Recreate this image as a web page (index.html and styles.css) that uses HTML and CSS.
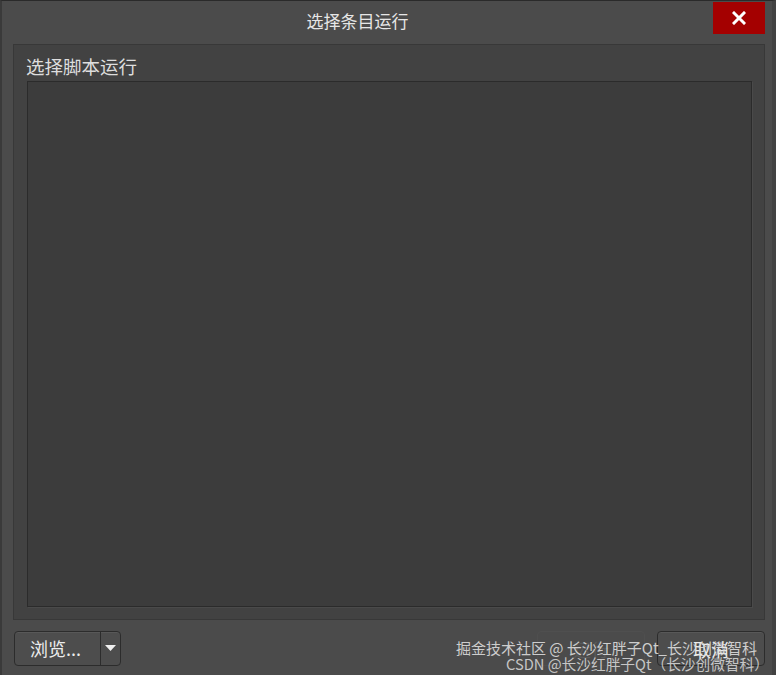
FILE: index.html
```html
<!DOCTYPE html>
<html lang="zh-CN">
<head>
    <meta charset="UTF-8">
    <title>选择条目运行</title>
    <link rel="stylesheet" href="styles.css">
</head>
<body>
    <div class="window">
        <!-- Barra de titulo -->
        <div class="titlebar">
            <span class="title">选择条目运行</span>
            <button class="close-btn">
                <svg width="14" height="14" viewBox="0 0 14 14">
                    <path d="M2 2 L12 12 M12 2 L2 12" stroke="#ffffff" stroke-width="3" stroke-linecap="square"/>
                </svg>
            </button>
        </div>

        <!-- Grupo -->
        <div class="group">
            <div class="group-label">选择脚本运行</div>
            <div class="script-list"></div>
        </div>

        <!-- Botoes -->
        <div class="footer">
            <div class="split-btn">
                <span class="split-main">浏览...</span>
                <span class="split-arrow">
                    <svg width="11" height="6" viewBox="0 0 11 6"><path d="M0 0 H11 L5.5 6 Z" fill="#f0f0f0"/></svg>
                </span>
            </div>
            <div class="right-btns">
                <button class="dlg-btn disabled">运行</button>
                <button class="dlg-btn">取消</button>
            </div>
        </div>

        <div class="watermark">
            <div class="wm-juejin">掘金技术社区 @ 长沙红胖子Qt_长沙创微智科</div>
            <div class="wm-csdn">CSDN @长沙红胖子Qt（长沙创微智科）</div>
        </div>
    </div>
</body>
</html>
```

FILE: styles.css
```css
/* Base */
* {
    box-sizing: border-box;
}

body {
    margin: 0;
    background-color: #4b4b4b;
    font-family: "Noto Sans CJK SC", "Noto Sans", sans-serif;
}

.window {
    position: relative;
    width: 776px;
    height: 675px;
    background-color: #4b4b4b;
    border-top: 1px solid #2a2a2a;
    border-left: 2px solid #3a3a3a;
    border-right: 4px solid #424242;
    display: flex;
    flex-direction: column;
}

/* Titulo */
.titlebar {
    height: 43px;
    display: flex;
    align-items: flex-start;
    padding-right: 7px;
}

.title {
    flex-grow: 1;
    text-align: center;
    color: #e6e6e6;
    font-size: 17px;
    line-height: 20px;
    margin-top: 10px;
}

.close-btn {
    width: 52px;
    height: 32px;
    margin-top: 1px;
    background-color: #a40000;
    border: none;
    padding: 0;
    display: flex;
    align-items: center;
    justify-content: center;
}

/* Grupo */
.group {
    margin: 0 7px 0 11px;
    height: 576px;
    background-color: #424242;
    border: 1px solid #383838;
    padding: 11px 12px 12px 13px;
    display: flex;
    flex-direction: column;
}

.group-label {
    color: #dedede;
    font-size: 18.5px;
    line-height: 21px;
    margin-left: -1px;
    margin-bottom: 4px;
}

.script-list {
    flex-grow: 1;
    background-color: #3c3c3c;
    border: 1px solid #2b2b2b;
    box-shadow: 1px 1px 0 #4a4a4a;
}

/* Rodape */
.footer {
    margin: 11px 7px 0 12px;
    display: flex;
    justify-content: space-between;
}

.split-btn {
    width: 107px;
    height: 35px;
    display: flex;
    border: 1px solid #2c2c2c;
    border-radius: 4px;
    background-color: #4d4d4d;
    box-shadow: inset 0 1px 0 #585858;
}

.split-main {
    width: 86px;
    color: #ececec;
    font-size: 18px;
    line-height: 33px;
    padding-left: 15px;
    border-right: 1px solid #2c2c2c;
}

.split-arrow {
    flex-grow: 1;
    display: flex;
    align-items: center;
    justify-content: center;
    padding-bottom: 1px;
}

.right-btns {
    display: flex;
    gap: 12px;
}

.dlg-btn {
    width: 108px;
    height: 35px;
    border: 1px solid #2c2c2c;
    border-radius: 4px;
    background-color: #4d4d4d;
    color: #ececec;
    font-family: "Noto Sans CJK SC", "Noto Sans", sans-serif;
    font-size: 18px;
    box-shadow: inset 0 1px 0 #585858;
}

.dlg-btn.disabled {
    border-color: #4f4f4f;
    background-color: #4b4b4b;
    color: #5a5a5a;
    box-shadow: none;
}

/* Marca d'agua */
.watermark {
    position: absolute;
    right: 9px;
    bottom: 4px;
    text-align: right;
    color: #dcdcdc;
    pointer-events: none;
}

.wm-juejin {
    font-size: 15px;
    line-height: 16px;
    margin-right: 6px;
    opacity: 0.9;
}

.wm-csdn {
    font-size: 14.7px;
    line-height: 15px;
    opacity: 0.85;
    margin-right: -6px;
}
```
